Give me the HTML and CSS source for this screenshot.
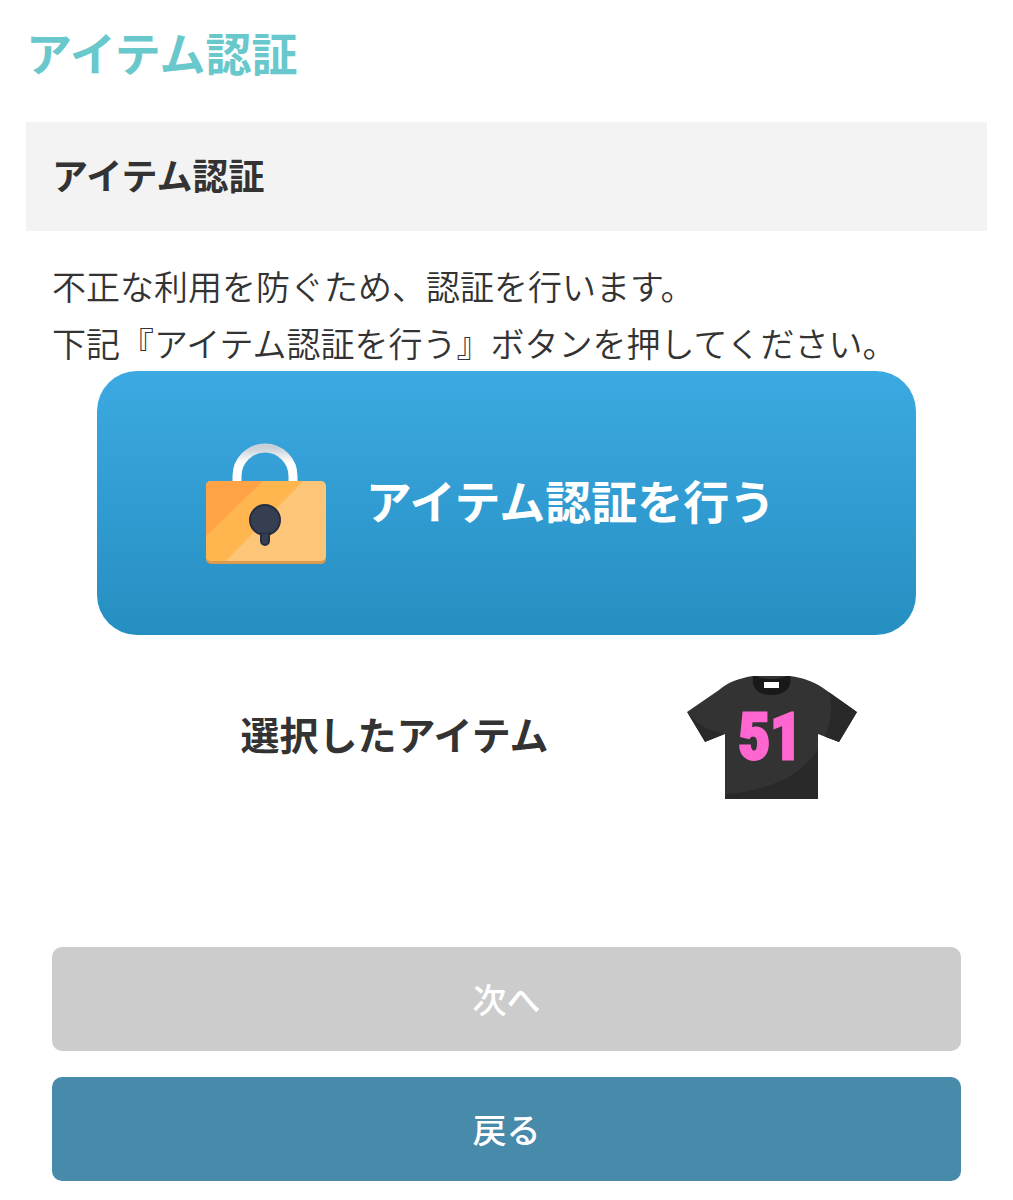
FILE: index.html
```html
<!DOCTYPE html>
<html lang="ja">
<head>
  <meta charset="UTF-8">
  <meta name="viewport" content="width=device-width, initial-scale=1.0">
  <title>アイテム認証</title>
  <link rel="stylesheet" href="styles.css">
</head>
<body>
  <main class="page">
    <h1 class="page-title">アイテム認証</h1>
    <h2 class="section-title">アイテム認証</h2>

    <div class="section-body">
      <p class="lead">不正な利用を防ぐため、認証を行います。<br>下記『アイテム認証を行う』ボタンを押してください。</p>

      <button type="button" class="verify-button">
        <svg class="lock-icon" viewBox="0 0 120 121" aria-hidden="true">
          <defs>
            <clipPath id="lock-body"><rect x="0" y="38" width="120" height="80" rx="5"/></clipPath>
            <linearGradient id="shackle" x1="0" y1="0" x2="0" y2="1">
              <stop offset="0" stop-color="#c9d0d8"/>
              <stop offset="0.4" stop-color="#fff"/>
            </linearGradient>
          </defs>
          <path d="M31 42V33a28 28 0 0 1 56 0v9" fill="none" stroke="url(#shackle)" stroke-width="9"/>
          <rect x="0" y="40" width="120" height="81" rx="5" fill="#dc9a4c"/>
          <g clip-path="url(#lock-body)">
            <rect x="0" y="38" width="120" height="80" fill="#fdc577"/>
            <path d="M0 38h97L20 118H0z" fill="#ffb64f"/>
            <path d="M0 38h57L0 93z" fill="#ffa346"/>
          </g>
          <circle cx="59" cy="77" r="15" fill="#353f51" stroke="#252c44" stroke-width="2"/>
          <path d="M55 90h8v8a4 4 0 0 1-8 0z" fill="#353f51" stroke="#252c44" stroke-width="2"/>
          <circle cx="59" cy="77" r="13" fill="#353f51"/>
        </svg>
        <span class="verify-label">アイテム認証を行う</span>
      </button>

      <div class="selected-item">
        <span class="item-label">選択したアイテム</span>
        <svg class="item-image" viewBox="0 0 170 124" role="img" aria-label="51番のTシャツ">
          <defs>
            <clipPath id="shirt"><path d="M66 1C53 3 41 7 32 15L0 37l18 30 20-8v65h93V59l21 8 18-30-34-24C126 6 116 3 103 1z"/></clipPath>
          </defs>
          <g clip-path="url(#shirt)">
            <rect width="170" height="124" fill="#333"/>
            <path d="M38 119c42-3 84-18 100-58 7-14 7-33 4-46l28 22v87H38z" fill="#292929"/>
            <path d="M0 37c11 14 24 19 38 22L18 67z" fill="#2a2a2a"/>
          </g>
          <path d="M66 1h4c4 4 25 4 29 0h4c3 13-7 19-19 19S64 14 66 1z" fill="#191919"/>
          <rect x="77" y="7" width="15" height="6" fill="#fff"/>
          <text class="shirt-number" x="83" y="84" text-anchor="middle">51</text>
        </svg>
      </div>

      <div class="actions">
        <button type="button" class="action-button" disabled>次へ</button>
        <button type="button" class="action-button back">戻る</button>
      </div>
    </div>
  </main>
</body>
</html>
```
FILE: styles.css
```css
:root {
  --text-color: #333;
  --title-color: #68c8cb;
  --heading-bg: #f3f3f3;
  --primary-color: #488aaa;
  --disabled-color: #ccc;
  --font-family: "Noto Sans CJK JP", sans-serif;
}

* { box-sizing: border-box; }

body {
  margin: 0;
  background-color: #fff;
  color: var(--text-color);
  font-family: var(--font-family);
}

button {
  border: 0;
  color: #fff;
  font-family: inherit;
  font-weight: 700;
  cursor: pointer;
}

.page { padding: 16px 26px 19px; }

.page-title {
  margin: 0 0 36px;
  color: var(--title-color);
  font-size: 46px;
  line-height: 70px;
}

.section-title {
  margin: 0;
  padding: 24px 26px 28px;
  background-color: var(--heading-bg);
  font-size: 36px;
  line-height: 57px;
}

.section-body { padding: 26px 26px 0; }

.lead {
  margin: 0;
  font-size: 34px;
  font-weight: 350;
  line-height: 57px;
}

.verify-button {
  display: flex;
  align-items: center;
  justify-content: center;
  gap: 40px;
  width: 90%;
  margin: 0 auto;
  padding: 72px 64px 71px 32px;
  border-radius: 40px;
  background: linear-gradient(#3ca9e2, #268fc1);
  font-size: 46px;
}

.lock-icon { flex: none; width: 120px; }
.verify-label,
.item-label { padding-bottom: 9px; }

.selected-item {
  display: flex;
  align-items: center;
  justify-content: center;
  gap: 138px;
  margin-top: 40px;
  padding-left: 84px;
}

.item-label { font-size: 39px; font-weight: 700; }
.item-image { width: 170px; }
.shirt-number {
  fill: #ff66d0;
  stroke: #ff66d0;
  stroke-width: 3px;
  font-family: "Roboto Condensed", "Liberation Sans", sans-serif;
  font-size: 64px;
  font-weight: 700;
}

.actions {
  display: grid;
  gap: 26px;
  margin-top: 148px;
}

.action-button {
  width: 100%;
  padding: 26px;
  border-radius: 10px;
  font-size: 34px;
  font-weight: 500;
  line-height: 52px;
}

.action-button:disabled { background-color: var(--disabled-color); cursor: default; }
.back { background-color: var(--primary-color); }
```
